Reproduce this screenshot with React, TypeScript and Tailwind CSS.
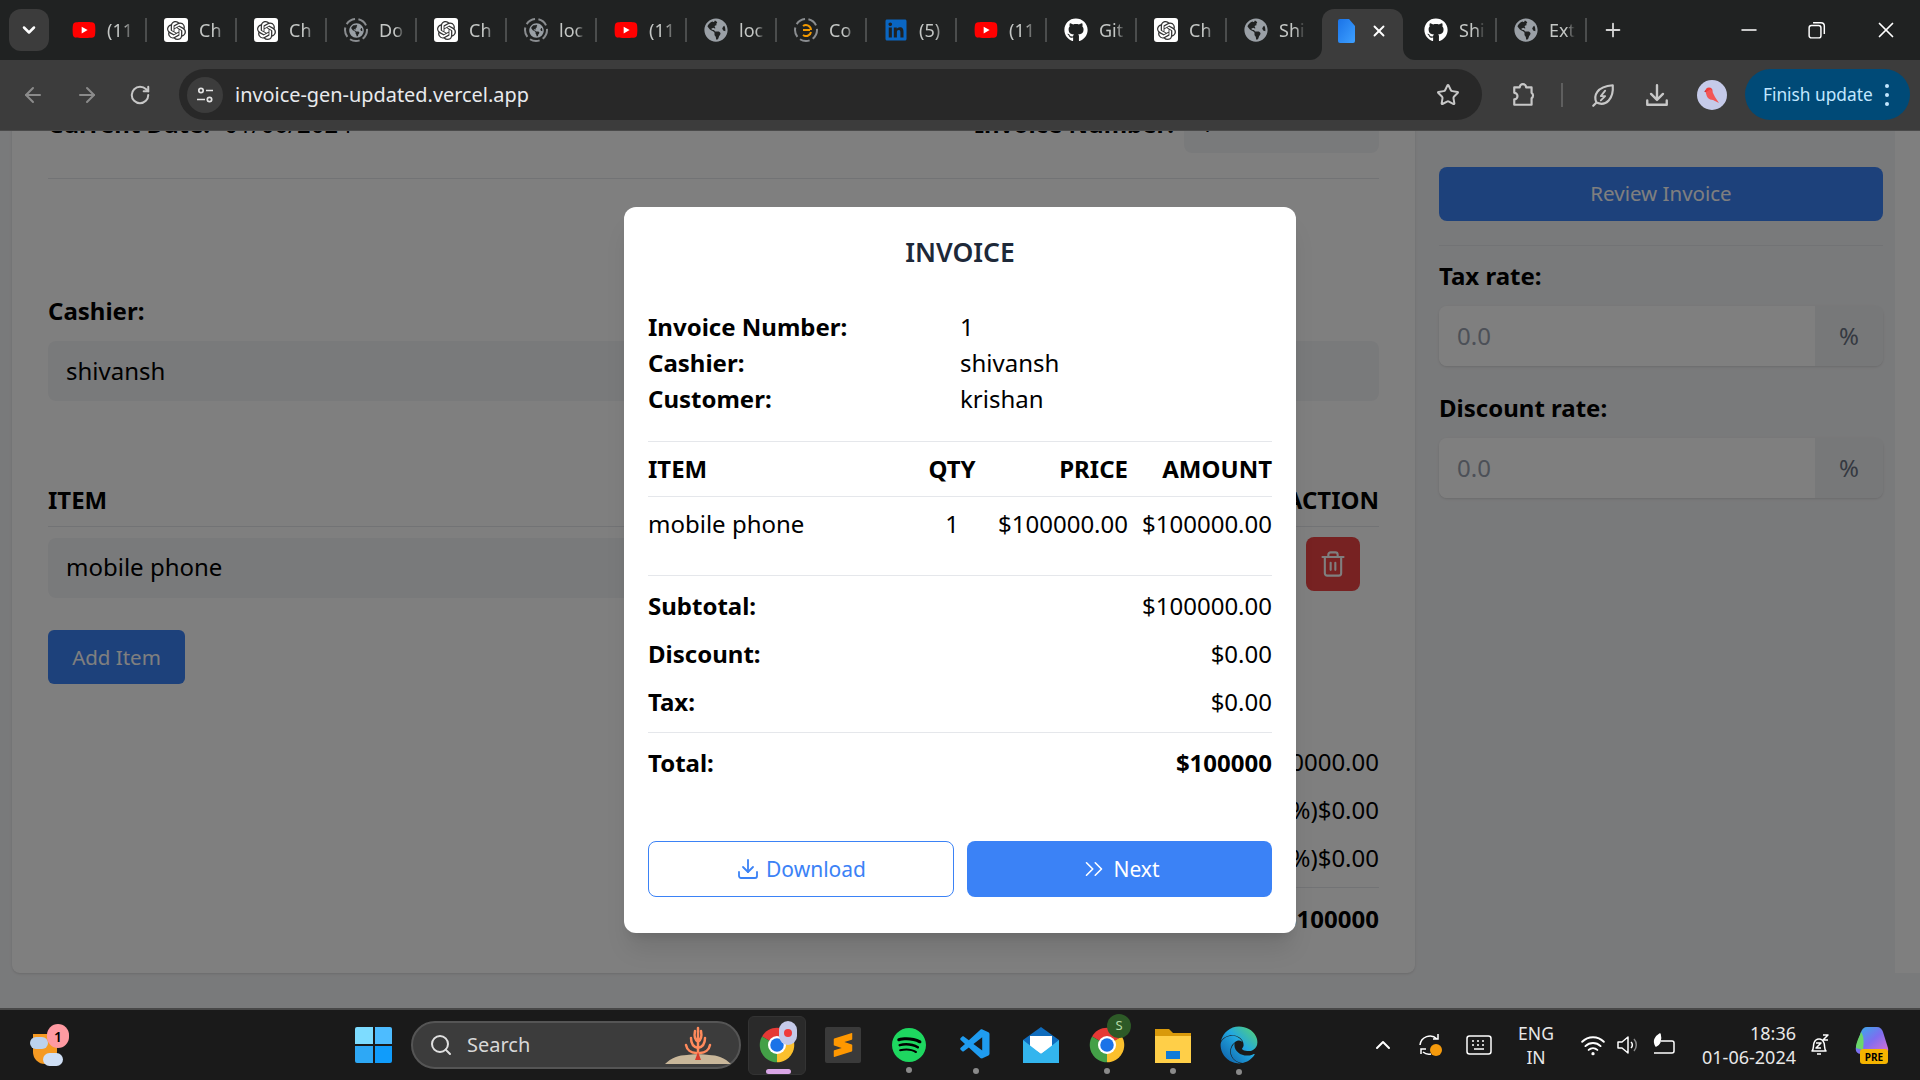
import { ArrowLeft, ArrowRight, ChevronDown, ChevronUp, ChevronsRight, Download, Minus, Plus, RotateCw, Search, Star, Trash2, X } from 'lucide-react';
import { FaEdge, FaGithub, FaGlobeAmericas, FaLinkedin, FaYoutube } from 'react-icons/fa';
import { SiOpenai, SiSpotify, SiSublimetext } from 'react-icons/si';
import { VscVscode } from 'react-icons/vsc';
import type { ReactNode } from 'react';

const GptIcon = () => (
  <span className="flex h-6 w-6 items-center justify-center rounded-[3px] bg-white">
    <SiOpenai className="h-[19px] w-[19px] text-[#333]" />
  </span>
);

const GlobeIcon = () => <FaGlobeAmericas className="h-6 w-6 text-[#9aa0a6]" />;

// dashed ring = a tab that is still loading
const RingIcon = ({ children }: { children: ReactNode }) => (
  <span className="relative flex h-6 w-6 items-center justify-center">
    <svg viewBox="0 0 24 24" className="absolute inset-0 h-6 w-6" fill="none" stroke="#8a8d90" strokeWidth="2">
      <circle cx="12" cy="12" r="11" strokeDasharray="10 3.500" />
    </svg>
    {children}
  </span>
);

const YoutubeIcon = () => (
  <span className="relative flex h-6 w-6 items-center justify-center">
    <span className="absolute h-[10px] w-[10px] bg-white" />
    <FaYoutube className="relative h-7 w-7 text-[#f00]" />
  </span>
);

const ringGlobe = <FaGlobeAmericas className="h-[15px] w-[15px] text-[#9aa0a6]" />;

const tabs = [
  { icon: <YoutubeIcon />, label: '(11' },
  { icon: <GptIcon />, label: 'Ch' },
  { icon: <GptIcon />, label: 'Ch' },
  { icon: <RingIcon>{ringGlobe}</RingIcon>, label: 'Do' },
  { icon: <GptIcon />, label: 'Ch' },
  { icon: <RingIcon>{ringGlobe}</RingIcon>, label: 'loc' },
  { icon: <YoutubeIcon />, label: '(11' },
  { icon: <GlobeIcon />, label: 'loc' },
  {
    icon: (
      <RingIcon>
        <svg viewBox="0 0 14 14" className="h-[14px] w-[14px]" fill="none" stroke="#f29900" strokeWidth="2">
          <path d="M4 3a5 5 0 0 1 8 4M12 9a5 5 0 0 1-8 3M4 7h7" />
        </svg>
      </RingIcon>
    ),
    label: 'Co',
  },
  { icon: <FaLinkedin className="h-6 w-6 text-[#0a66c2]" />, label: '(5)' },
  { icon: <YoutubeIcon />, label: '(11' },
  { icon: <FaGithub className="h-6 w-6 text-white" />, label: 'Git' },
  { icon: <GptIcon />, label: 'Ch' },
  { icon: <GlobeIcon />, label: 'Shi' },
];

function Tab({ icon, label, sep = true, first = false }: { icon: ReactNode; label: string; sep?: boolean; first?: boolean }) {
  return (
    <div className={`flex h-[60px] shrink-0 items-center pl-[17px] ${first ? 'w-[92px]' : 'w-[90px]'}`}>
      <span className="flex w-6 justify-center">{icon}</span>
      <span className="ml-[11px] w-[26px] overflow-hidden whitespace-nowrap text-[18px] text-[#c4c7c5] [mask-image:linear-gradient(90deg,#000_65%,transparent)]">
        {label}
      </span>
      <span className={sep ? 'ml-auto h-6 w-[2px] bg-[#4b4d4d]' : 'hidden'} />
    </div>
  );
}

function TabStrip() {
  return (
    <div className="flex h-[60px] items-center bg-[#202222]">
      <div className="ml-[9px] mr-[6px] flex h-[42px] w-[40px] items-center justify-center rounded-xl bg-[#3c3c3c]">
        <ChevronDown className="h-5 w-5 text-white" strokeWidth={3} />
      </div>
      {tabs.map((t, i) => (
        <Tab key={i} icon={t.icon} label={t.label} sep={i < 13} first={i === 0} />
      ))}
      <div className="relative ml-[5px] mt-[9px] flex h-[51px] w-[81px] shrink-0 items-center rounded-t-xl bg-[#3c3c3c] pl-4">
        <span className="absolute -left-3 bottom-0 h-3 w-3 bg-[#3c3c3c]"><span className="block h-3 w-3 rounded-br-xl bg-[#202222]" /></span>
        <span className="absolute -right-3 bottom-0 h-3 w-3 bg-[#3c3c3c]"><span className="block h-3 w-3 rounded-bl-xl bg-[#202222]" /></span>
        <svg viewBox="0 0 17 24" className="-mt-2 h-6 w-[17px]">
          <defs>
            <linearGradient id="doc" x1="0" y1="0" x2="1" y2="1">
              <stop offset="0" stopColor="#1a73e8" />
              <stop offset="1" stopColor="#3ea0ff" />
            </linearGradient>
          </defs>
          <path d="M2 0h9l6 7v15a2 2 0 0 1-2 2H2a2 2 0 0 1-2-2V2a2 2 0 0 1 2-2z" fill="url(#doc)" />
        </svg>
        <X className="-mt-2 ml-[15px] h-[18px] w-[18px] text-white" strokeWidth={2.5} />
      </div>
      <div className="ml-1 flex">
        <Tab icon={<FaGithub className="h-6 w-6 text-white" />} label="Shi" />
        <Tab icon={<GlobeIcon />} label="Ext" />
      </div>
      <Plus className="ml-[15px] h-[22px] w-[22px] text-[#d5d5d5]" />
      <div className="ml-auto flex items-center">
        <Minus className="mr-[47px] h-6 w-6 text-white" strokeWidth={1.5} />
        <svg viewBox="0 0 16 16" className="mr-[47px] h-[18px] w-[18px]" fill="none" stroke="#fff" strokeWidth="1.3">
          <rect x="1" y="4" width="10.5" height="11" rx="2" />
          <path d="M4.5 1.5h7a3 3 0 0 1 3 3v7" />
        </svg>
        <X className="mr-[21px] h-[26px] w-[26px] text-white" strokeWidth={1.6} />
      </div>
    </div>
  );
}

function Toolbar() {
  return (
    <div className="flex h-[71px] items-center border-b border-[#4a4a4a] bg-[#3c3c3c] pb-px">
      <ArrowLeft className="ml-[21px] h-[24px] w-[24px] text-[#8b8b8b]" strokeWidth={2} />
      <ArrowRight className="ml-[30px] h-[24px] w-[24px] text-[#8b8b8b]" strokeWidth={2} />
      <RotateCw className="ml-[30px] h-[22px] w-[22px] text-[#c7c7c7]" strokeWidth={2.2} />
      <div className="ml-[28px] flex h-[51px] w-[1303px] items-center rounded-full bg-[#282828] pl-[8px]">
        <span className="flex h-9 w-9 items-center justify-center rounded-full bg-[#3c3c3c]">
          <svg viewBox="0 0 20 20" className="h-5 w-5" fill="none" stroke="#e3e3e3" strokeWidth="1.7">
            <circle cx="6" cy="5.5" r="2.2" />
            <path d="M11 5.5h7M2 14.5h8" />
            <circle cx="14.5" cy="14.5" r="2.2" />
          </svg>
        </span>
        <span className="ml-[12px] text-[19.900px] text-[#e8eaed]">invoice-gen-updated.vercel.app</span>
        <Star className="ml-auto mr-[22px] h-[24px] w-[24px] text-[#c7c7c7]" strokeWidth={2} />
      </div>
      <svg viewBox="0 0 24 24" className="ml-[29px] h-[26px] w-[26px]" fill="none" stroke="#c7c7c7" strokeWidth="2" strokeLinejoin="round">
        <path d="M3 5h5a3 3 0 0 1 6 0h5v5a3 3 0 0 1 0 5v6H3v-5a3 3 0 0 0 0-6z" />
      </svg>
      <span className="ml-[24px] h-6 w-[2px] bg-[#5f5f5f]" />
      <svg viewBox="0 0 24 24" className="ml-[27px] h-[26px] w-[26px]" fill="none" stroke="#c7c7c7" strokeWidth="2" strokeLinejoin="round" strokeLinecap="round">
        <path d="M3 22l3-3c-3-6 0-15 15-16 1 12-6 20-15 16" />
        <path d="M14 8l-4 5h4l-4 4" strokeWidth="1.700" />
      </svg>
      <svg viewBox="0 0 24 24" className="ml-[28px] h-[26px] w-[26px]" fill="none" stroke="#c7c7c7" strokeWidth="2.200" strokeLinecap="round" strokeLinejoin="round">
        <path d="M12 3v13M6.500 11l5.500 5.500 5.500-5.500M3 17v4h18v-4" />
      </svg>
      <span className="ml-[27px] flex h-[30px] w-[30px] items-center justify-center rounded-full bg-[#c5cae9]">
        <svg viewBox="0 0 20 20" className="h-5 w-5">
          <circle cx="7" cy="6" r="3.500" fill="#ef3b3b" />
          <path d="M4 7c0 5 3 8 7 8l6 3-4-6-4-8z" fill="#f25555" />
          <path d="M4 5L2 6.500 4 7z" fill="#c62828" />
        </svg>
      </span>
      <div className="ml-[18px] flex h-[51px] w-[165px] items-center rounded-full bg-[#004a77] pl-[18px]">
        <span className="text-[17.300px] text-[#c2e7ff]">Finish update</span>
        <span className="ml-[12px] flex flex-col gap-[5px]">
          <span className="h-1 w-1 rounded-full bg-[#c2e7ff]" />
          <span className="h-1 w-1 rounded-full bg-[#c2e7ff]" />
          <span className="h-1 w-1 rounded-full bg-[#c2e7ff]" />
        </span>
      </div>
    </div>
  );
}

function InvoiceEditor() {
  return (
    <div className="-mt-[74px] flex">
      <div className="ml-3 h-[916px] w-[1403px] shrink-0 rounded-lg bg-white p-9 text-[24px] leading-9 shadow-sm">
        <div className="flex h-[60px] items-center justify-between">
          <div className="mt-px">
            <span className="mr-2 font-bold">Current Date: </span>01/06/2024
          </div>
          <div className="flex items-center">
            <span className="mt-px font-bold">Invoice Number: </span>
            <span className="ml-[10px] flex h-[60px] w-[195px] items-center rounded-lg bg-gray-100 px-4">1</span>
          </div>
        </div>
        <div className="mt-[25px] border-t border-gray-200" />
        <div className="mt-[114px] font-bold">Cashier:</div>
        <div className="mt-[12px] flex h-[60px] items-center rounded-lg bg-gray-100 px-[18px]">shivansh</div>
        <div className="mt-[81px] flex h-[45px] justify-between border-b border-gray-200 font-bold">
          <span>ITEM</span>
          <span>ACTION</span>
        </div>
        <div className="flex h-[62px] items-start pt-[11px]">
          <div className="flex h-[60px] flex-1 items-center rounded-lg bg-gray-100 px-[18px] pb-[2px]">mobile phone</div>
          <div className="ml-[26px] mr-[19px] -mt-px flex h-[54px] w-[54px] items-center justify-center rounded-lg bg-[#ef4444]">
            <Trash2 className="h-7 w-7 text-white" strokeWidth={1.800} />
          </div>
        </div>
        <div className="mt-[41px] flex h-[54px] w-[137px] items-center justify-center rounded-md bg-[#3b82f6] text-[20.500px] text-white">Add Item</div>
        <div className="ml-auto mt-[60px] flex w-[600px] flex-col">
          <div className="flex h-9 justify-between"><b>Subtotal:</b><span>$100000.00</span></div>
          <div className="mt-3 flex h-9 justify-between"><b>Discount:</b><span>(0%)$0.00</span></div>
          <div className="mt-3 flex h-9 justify-between"><b>Tax:</b><span>(0%)$0.00</span></div>
          <div className="mt-[11px] border-t border-gray-200" />
          <div className="mt-[13px] flex h-9 justify-between font-bold"><span>Total:</span><span>$100000</span></div>
        </div>
      </div>
      <div className="w-[480px] shrink-0 pl-[24px] pr-3 pt-[110px] text-[24px] leading-9">
        <div className="flex h-[54px] items-center justify-center rounded-lg bg-[#3b82f6] pb-[2px] text-[20.500px] text-white">Review Invoice</div>
        <div className="mt-6 border-t border-gray-200" />
        <RateField label="Tax rate:" className="mt-[12px]" />
        <RateField label="Discount rate:" className="mt-[24px]" />
      </div>
      <div className="flex-1 bg-white" />
    </div>
  );
}

function RateField({ label, className }: { label: string; className: string }) {
  return (
    <div className={className}>
      <div className="font-bold">{label}</div>
      <div className="mt-[12px] flex h-[60px] overflow-hidden rounded-lg shadow-sm">
        <div className="flex flex-1 items-center bg-white px-[18px] text-gray-400">0.0</div>
        <div className="flex w-[68px] items-center justify-center bg-[#eef0f3] text-gray-500">%</div>
      </div>
    </div>
  );
}

function InvoiceModal() {
  return (
    <div className="absolute inset-0 bg-black/50">
      <div className="absolute left-[624px] top-[76px] h-[726px] w-[672px] rounded-xl bg-white px-6 pt-[27px] text-[24px] leading-9 text-black shadow-xl">
        <h2 className="text-center text-[26.500px] font-semibold text-gray-800">INVOICE</h2>
        <div className="mt-[39px] grid grid-cols-[312px_1fr] pb-6">
          <b>Invoice Number:</b><span>1</span>
          <b>Cashier:</b><span>shivansh</span>
          <b>Customer:</b><span>krishan</span>
        </div>
        <div className="grid h-[56px] grid-cols-[274px_60px_146px_144px] items-center border-y border-gray-200 font-bold">
          <span>ITEM</span>
          <span className="text-center">QTY</span>
          <span className="text-right">PRICE</span>
          <span className="text-right">AMOUNT</span>
        </div>
        <div className="grid h-[79px] grid-cols-[274px_60px_146px_144px] border-b border-gray-200 pt-[9px]">
          <span>mobile phone</span>
          <span className="text-center">1</span>
          <span className="text-right">$100000.00</span>
          <span className="text-right">$100000.00</span>
        </div>
        <div className="mt-[12px] flex flex-col gap-3">
          <div className="flex justify-between"><b>Subtotal:</b><span>$100000.00</span></div>
          <div className="flex justify-between"><b>Discount:</b><span>$0.00</span></div>
          <div className="flex justify-between"><b>Tax:</b><span>$0.00</span></div>
        </div>
        <div className="mt-3 flex h-[49px] items-end justify-between border-t border-gray-200 font-bold">
          <span>Total:</span><span>$100000</span>
        </div>
        <div className="mt-[60px] grid grid-cols-[306px_305px] gap-[13px] text-[21px]">
          <button className="flex h-14 items-center justify-center gap-1.5 rounded-lg border border-[#3b82f6] text-[#3b82f6]">
            <Download className="h-6 w-6" strokeWidth={1.800} />Download
          </button>
          <button className="flex h-14 items-center justify-center gap-1 rounded-lg bg-[#3b82f6] text-white">
            <ChevronsRight className="h-[30px] w-[30px]" strokeWidth={1.300} />Next
          </button>
        </div>
      </div>
    </div>
  );
}

const ChromeLogo = ({ className }: { className: string }) => (
  <svg viewBox="0 0 48 48" className={className}>
    <path d="M24 24L4.100 12.500A23 23 0 0 1 43.900 12.500z" fill="#e53935" />
    <path d="M24 24L43.900 12.500A23 23 0 0 1 24 47z" fill="#fbc02d" />
    <path d="M24 24L24 47A23 23 0 0 1 4.100 12.500z" fill="#43a047" />
    <circle cx="24" cy="24" r="12" fill="#fff" />
    <circle cx="24" cy="24" r="9" fill="#1a73e8" />
  </svg>
);

const Dot = () => <span className="absolute bottom-[-11px] left-1/2 h-[6px] w-[6px] -translate-x-1/2 rounded-full bg-[#8a8a8a]" />;

function Taskbar() {
  return (
    <div className="flex h-[72px] items-center border-t-2 border-[#484848] bg-[#1a1a1a] text-white">
      {/* weather */}
      <div className="relative ml-[30px] h-[42px] w-[40px]">
        <span className="absolute left-[3px] top-[10px] h-[30px] w-[24px] rounded-b-full rounded-t-lg bg-[#f59a23]" />
        <span className="absolute left-0 top-[13px] h-3 w-[18px] rounded-full bg-[#bcd2ee]" />
        <span className="absolute bottom-0 left-[13px] h-[13px] w-[20px] rounded-full bg-[#cfdff5]" />
        <span className="absolute left-[17px] top-0 flex h-[24px] w-[22px] items-center justify-center rounded-full bg-[#ff9aa2] text-[14px] font-semibold text-black">1</span>
      </div>
      {/* windows */}
      <div className="ml-[285px] grid h-[36px] w-[37px] grid-cols-2 gap-[2px]">
        <span className="rounded-tl-[2px] bg-[#7ddcff]" />
        <span className="rounded-tr-[2px] bg-[#4dbcff]" />
        <span className="rounded-bl-[2px] bg-[#2ea8f5]" />
        <span className="rounded-br-[2px] bg-[#109cfb]" />
      </div>
      {/* search */}
      <div className="ml-[19px] flex h-[48px] w-[330px] items-center rounded-full border-2 border-[#555] bg-[#3c3c3c] pl-4">
        <Search className="h-6 w-6 text-[#e0e0e0]" strokeWidth={2} />
        <span className="ml-[14px] text-[20px] text-[#d8d8d8]">Search</span>
        <svg viewBox="0 0 66 38" className="ml-auto mr-2 h-[38px] w-[66px]">
          <path d="M0 38c6-6 14-9 22-9 4-1 18-1 22 0 8 0 16 3 22 9z" fill="#c9b79a" />
          <g fill="none" stroke="#ff8a5c" strokeWidth="2.500" strokeLinecap="round">
            <path d="M33 31V12M33 2v10M33 22c-5-1-7-5-7-10M33 22c5-1 7-5 7-10M33 16c-3-2-4-6-3-11M33 16c3-2 4-6 3-11M31 27c-5 0-9-3-10-8M35 27c5 0 9-3 10-8" />
          </g>
          <path d="M30 34l3-8 3 8z" fill="#d93a2b" />
        </svg>
      </div>
      {/* pinned apps */}
      <div className="relative ml-[7px] flex h-[59px] w-[58px] items-center justify-center rounded-md border border-[#333] bg-[#2a2a2a]">
        <ChromeLogo className="h-9 w-9" />
        <span className="absolute right-[8px] top-[4px] flex h-6 w-[18px] items-center justify-center rounded-full bg-[#c5cae9]">
          <span className="h-2 w-2 rounded-full bg-[#ef3b3b]" />
        </span>
        <span className="absolute bottom-0 left-[17px] h-[5px] w-[25px] rounded-full bg-[#d9a6e6]" />
      </div>
      <div className="ml-[19px] flex h-9 w-9 items-center justify-center rounded-[2px] bg-[#3a3a3a]">
        <SiSublimetext className="h-6 w-6 text-[#ff9800]" />
      </div>
      <div className="relative ml-[31px] h-[34px] w-[34px]">
        <span className="absolute inset-[4px] rounded-full bg-black" />
        <SiSpotify className="relative h-[34px] w-[34px] text-[#1ed760]" />
        <Dot />
      </div>
      <div className="relative ml-[32px] h-9 w-9">
        <VscVscode className="h-9 w-9 text-[#1f9cf0]" />
        <Dot />
      </div>
      <svg viewBox="0 0 36 36" className="ml-[29px] h-9 w-9">
        <path d="M0 13L18 0l18 13v23H0z" fill="#0f6cbd" />
        <path d="M7 9h22v11l-11 7-11-7z" fill="#fff" />
        <path d="M0 13l18 14 18-14v23H0z" fill="#33b5ee" />
      </svg>
      <div className="relative ml-[30px] h-9 w-9">
        <ChromeLogo className="h-9 w-9" />
        <span className="absolute -top-[13px] left-[18px] flex h-[24px] w-[24px] items-center justify-center rounded-full bg-[#2d5a27] text-[13px] text-[#b7dca9]">S</span>
        <Dot />
      </div>
      <div className="relative ml-[30px] h-9 w-9">
        <svg viewBox="0 0 36 36" className="h-9 w-9">
          <path d="M0 2h14l4 4h18v5H0z" fill="#d99a0b" />
          <path d="M0 9h36v27H0z" fill="#ffcf48" />
          <path d="M11 24h14v8H11z" fill="#0f7bd8" />
        </svg>
        <Dot />
      </div>
      <div className="relative ml-[29px] h-[38px] w-[38px]">
        <svg width="0" height="0" className="absolute">
          <defs>
            <linearGradient id="edgeFill" x1="1" y1="0" x2="0" y2="1">
              <stop offset="0" stopColor="#5ad66b" />
              <stop offset="0.45" stopColor="#22a7e0" />
              <stop offset="1" stopColor="#0c59a4" />
            </linearGradient>
          </defs>
        </svg>
        <FaEdge className="h-[38px] w-[38px]" fill="url(#edgeFill)" />
        <Dot />
      </div>
      {/* tray */}
      <ChevronUp className="ml-[113px] h-6 w-6 text-white" strokeWidth={2} />
      <svg viewBox="0 0 26 26" className="ml-[22px] h-[26px] w-[26px]" fill="none" stroke="#fff" strokeWidth="1.500">
        <path d="M20 7a10 10 0 0 0-17 6M4 22v-5h5M21 2v5h-5M6 20a9 9 0 0 0 8 2" />
        <circle cx="19" cy="18" r="6" fill="#f59a0c" stroke="none" />
      </svg>
      <svg viewBox="0 0 26 20" className="ml-[23px] h-5 w-[26px]" fill="none" stroke="#fff" strokeWidth="1.500">
        <rect x="1" y="1" width="24" height="18" rx="2.500" />
        <path d="M6 6h2M11 6h2M16 6h2M6 10h2M11 10h2M16 10h2M8 14h10" />
      </svg>
      <div className="ml-[14px] flex w-[60px] flex-col items-center text-[17.500px] leading-6 text-[#e8e8e8]">
        <span>ENG</span>
        <span>IN</span>
      </div>
      <svg viewBox="0 0 24 24" className="ml-[14px] h-[26px] w-[26px]" fill="none" stroke="#fff" strokeWidth="1.800" strokeLinecap="round">
        <path d="M2 9a14 14 0 0 1 20 0M5 13a10 10 0 0 1 14 0M8 16.500a6 6 0 0 1 8 0" />
        <circle cx="12" cy="20" r="1.500" fill="#fff" stroke="none" />
      </svg>
      <svg viewBox="0 0 24 24" className="ml-[9px] h-[24px] w-[24px]" fill="none" stroke="#fff" strokeWidth="1.500" strokeLinejoin="round">
        <path d="M3 9h4l6-5v16l-6-5H3z" />
        <path d="M16 9a4 4 0 0 1 0 6" />
        <path d="M19 6a9 9 0 0 1 0 12" stroke="#888" />
      </svg>
      <svg viewBox="0 0 26 24" className="ml-[12px] h-6 w-[26px]" fill="none" stroke="#fff" strokeWidth="1.500" strokeLinejoin="round">
        <path d="M10 8h11a2 2 0 0 1 2 2v8a2 2 0 0 1-2 2H3" />
        <path d="M9 1c-5 3-7 7-4 12 3-1 6-5 4-12z" fill="#fff" />
      </svg>
      <div className="ml-[25px] flex w-[94px] flex-col items-end whitespace-nowrap text-[18px] leading-6 text-[#e8e8e8]">
        <span>18:36</span>
        <span>01-06-2024</span>
      </div>
      <svg viewBox="0 0 24 26" className="ml-[11px] h-[26px] w-6" fill="none" stroke="#fff" strokeWidth="1.500" strokeLinejoin="round">
        <path d="M5 19c2-2 1-5 2-8 1-3 3-4 5-4s4 1 5 4c1 3 0 6 2 8z" />
        <path d="M10 22h4M9 11h5l-5 5h5M16 3h5l-5 5h5" strokeWidth="1.500" />
      </svg>
      <div className="relative ml-[22px] h-[38px] w-[38px]">
        <svg viewBox="0 0 38 38" className="h-[38px] w-[38px]">
          <defs>
            <linearGradient id="copilot" x1="0" y1="0" x2="1" y2="1">
              <stop offset="0" stopColor="#2fb4e8" />
              <stop offset="0.5" stopColor="#7d6ef0" />
              <stop offset="1" stopColor="#e36fcf" />
            </linearGradient>
          </defs>
          <path d="M14 1h10c3 0 5 2 6 5l5 16c1 4-2 6-5 6H8C4 28 2 25 3 21L8 6c1-3 3-5 6-5z" fill="url(#copilot)" />
          <path d="M3 22c0-6 3-10 5-16 3 4 3 10 2 18z" fill="#6bd66a" />
        </svg>
        <span className="absolute bottom-0 left-[7px] flex h-[15px] w-[28px] items-center justify-center rounded-[3px] bg-[#f5b400] text-[10px] font-bold leading-none text-black">PRE</span>
      </div>
    </div>
  );
}

export default function App() {
  return (
    <div className="flex h-screen w-screen flex-col overflow-hidden bg-white font-['Noto_Sans',sans-serif] text-black">
      <TabStrip />
      <Toolbar />
      <main className="relative flex-1 overflow-hidden bg-gray-100">
        <InvoiceEditor />
        <InvoiceModal />
      </main>
      <Taskbar />
    </div>
  );
}
